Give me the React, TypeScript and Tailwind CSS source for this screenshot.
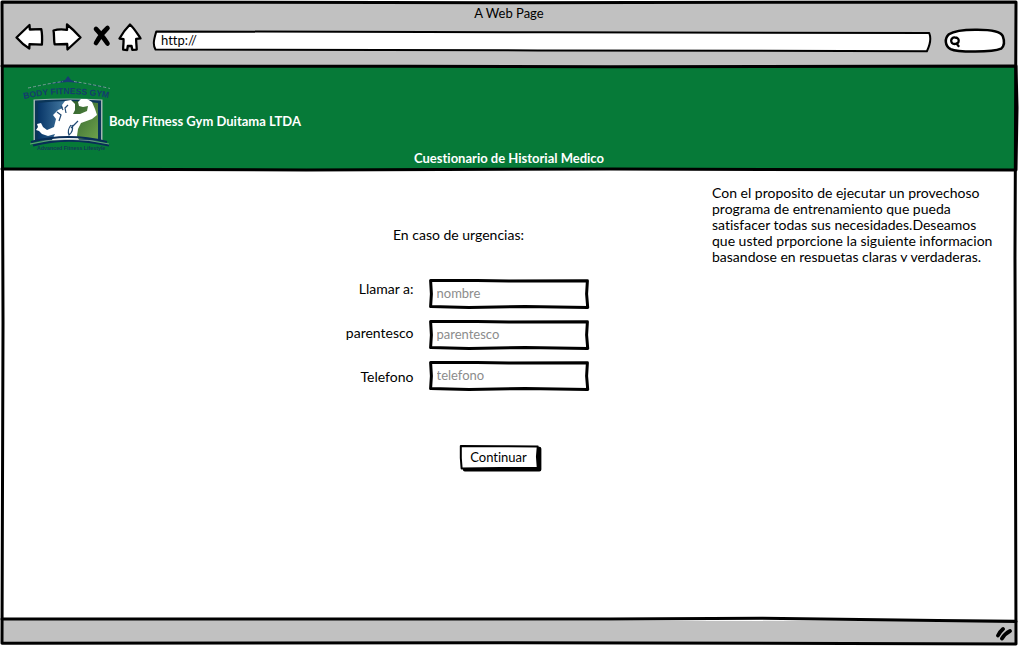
import type { ReactNode } from "react";

const ink = { stroke: "#000", vectorEffect: "non-scaling-stroke" as const };

function Sketch({ d, width = 3, fill = "none", className }: { d: string; width?: number; fill?: string; className: string }) {
  return (
    <svg aria-hidden="true" viewBox="0 0 100 100" preserveAspectRatio="none" className={`pointer-events-none block overflow-visible ${className}`}>
      <path {...ink} d={d} fill={fill} strokeWidth={width} strokeLinejoin="round" strokeLinecap="round" />
    </svg>
  );
}

function ToolButton({ label, children, className }: { label: string; children: ReactNode; className: string }) {
  return (
    <button type="button" aria-label={label} className={`block shrink-0 ${className}`}>
      {children}
    </button>
  );
}

const glyph = { fill: "#fff", stroke: "#000", strokeWidth: 2.3, strokeLinejoin: "round" as const, strokeLinecap: "round" as const };

function Toolbar() {
  return (
    <header className="h-[65px] bg-[#c1c1c1] text-center">
      <h1 className="pt-[2px] text-[13px] leading-[18px]">A Web Page</h1>
      <div className="flex items-start px-3">
        <ToolButton label="Atrás" className="w-[32px]">
          <svg viewBox="0 0 32 32" className="h-8 w-8">
            <path {...glyph} d="M2.500 15.500 15.500 3l.3 4.500 11.500-.3c.8 4 .9 11 .6 15.500l-12.400-.5-.2 4.300C11 24 6 19.500 2.500 15.500z" />
          </svg>
        </ToolButton>
        <ToolButton label="Adelante" className="ml-[6px] w-[32px]">
          <svg viewBox="0 0 32 32" className="h-8 w-8">
            <path {...glyph} d="M1.500 8.500c3-1 10-1.200 13.500-.7V2.500C19.500 6 24.500 11 28.500 15.500L15.500 27.500l-.3-5.500-12.500.3c-1-3-.3-10-1.200-13.800z" />
          </svg>
        </ToolButton>
        <ToolButton label="Detener" className="ml-[8px] w-[20px]">
          <svg viewBox="0 0 20 32" className="h-8 w-5">
            <path d="M4 7Q9 12 15.500 21.500M15.500 6Q9 12 4 21" fill="none" stroke="#000" strokeWidth="4.600" strokeLinecap="round" />
          </svg>
        </ToolButton>
        <ToolButton label="Inicio" className="ml-[6px] w-[24px]">
          <svg viewBox="0 0 24 32" className="h-8 w-6">
            <path {...glyph} d="M12 2.500C8 6.500 4 12 1.500 16.500l4 .7c.3 4-.5 7-.3 10.500l4 .3.600-4 3.700-.2.8 4 4.400-.2c0-4-.7-7-.5-10.800l4.300-.5C19.500 12 16 6 12 2.500z" />
          </svg>
        </ToolButton>
        <div className="relative mt-[9px] ml-[12px] h-[20px] min-w-0 flex-1">
          <Sketch d="M.3 2C0 40-.2 70 .2 93 30 93 70 101 99.600 101 100 70 100.200 40 99.900 10 70 10 30 3 .3 2Z" width={2} fill="#fff" className="absolute inset-0 h-full w-full" />
          <input aria-label="Dirección" defaultValue="http://" className="relative block w-full bg-transparent px-[7px] py-px text-[13px] leading-4 outline-none" />
        </div>
        <div className="relative mt-[7px] ml-[16px] h-[24px] w-[58px]">
          <Sketch d="M5 22C15 6 35 3 50 3 80 2 95 12 98 30 101 50 101 70 95 82 80 98 20 98 8 84-2 70-3 40 5 22Z" width={2.500} fill="#fff" className="absolute inset-0 h-full w-full" />
          <input aria-label="Buscar" type="search" className="relative block w-full bg-transparent py-1 pr-2 pl-[18px] text-[13px] leading-4 outline-none" />
          <svg aria-hidden="true" viewBox="0 0 12 14" className="absolute top-[6px] left-[4px] h-[14px] w-[12px]">
            <path d="M5 2.500c-5-.5-5 6.500-.5 6.500C10 9 10 2.500 5 2.500ZM6.500 8.500l2 2.500" fill="none" stroke="#000" strokeWidth="2.300" strokeLinecap="round" />
          </svg>
        </div>
      </div>
    </header>
  );
}

function Logo() {
  return (
    <svg viewBox="0 0 88 74" role="img" aria-label="Body Fitness Gym" className="h-[74px] w-[88px] shrink-0 overflow-visible">
      <defs>
        <linearGradient id="shieldLeft" x1="0" x2="1">
          <stop offset="0" stopColor="#073567" />
          <stop offset="1" stopColor="#4f86ac" />
        </linearGradient>
        <linearGradient id="shieldRight" x1="0" x2="1" y1="0" y2="1">
          <stop offset="0" stopColor="#2c5b2b" />
          <stop offset="1" stopColor="#6da24b" />
        </linearGradient>
        <path id="arch" d="M3 23Q45 13 92 23" />
      </defs>
      <path d="M7 12Q34 7 44 4l3-4 3 4q10 4 39 8Q64 7 47 6 30 7 7 12Z" fill="#173d72" />
      <path d="M7 12Q30 7 42 5.500M53 5.500Q70 8 89 12.500" fill="none" stroke="#8fa9a8" strokeWidth=".8" strokeDasharray="3 2" />
      <text fill="#153c6d" fontFamily="Liberation Sans" fontSize="8.600">
        <textPath href="#arch">BODY FITNESS GYM</textPath>
      </text>
      <path d="M12.500 23.500q34-2 69 0v41h-69z" fill="#a2b4b3" />
      <path d="M14 24.500q33-2 66 0v40H14z" fill="#0a3558" />
      <path d="M17 27q16-2 32-2v38H17z" fill="url(#shieldLeft)" />
      <path d="M49 25q15 0 28 2v36H49z" fill="url(#shieldRight)" />
      <path d="M16 48l4-1 2 4 4 3 7-3 2-8-3-4 5-5 5-2-1-3 3-4 6-1 4 4v6l-2 4 7 0 7-3 1-5-5 1-4-1-1-4 3-3 6 0 5 3 3 7 2 6-5 4-11 4-3 6-1 7 2 4-27 0 3-6-7 2-6-2-3-3-3-1 2-3z" fill="#fff" />
      <path d="M36 36l4 3-2 6M40 30l2 4M47 29l-3 3 1 5M57 45l-7 7M50 49q-4 5-2 10 5-4 3-10" fill="none" stroke="#214b73" strokeWidth="1.200" />
      <path d="M10 66Q47 56 86 66M12 69.500Q47 60 88 69.500" fill="none" stroke="#082d57" strokeWidth="2" />
      <path d="M9 68Q47 58.500 88 68" fill="none" stroke="#a6b9ab" strokeWidth=".6" />
      <text x="16" y="74" fill="#123b57" fontFamily="Liberation Sans" fontSize="5.300">Advanced Fitness Lifestyle</text>
    </svg>
  );
}

const fields = [
  { id: "nombre", label: "Llamar a:", type: "text" },
  { id: "parentesco", label: "parentesco", type: "text" },
  { id: "telefono", label: "Telefono", type: "tel" },
];

export default function App() {
  return (
    <div className="flex min-h-screen flex-col bg-white pt-[2px] pr-[3px] pb-[2px] pl-[2px] font-['Lato','Noto_Sans',sans-serif] text-[14px] text-black [font-variant-ligatures:none]">
      <div className="relative flex flex-1 flex-col">
        <Toolbar />
        <section className="relative flex flex-col bg-[#067a38] pt-[9px] pb-[3px] font-bold text-white">
          <div className="flex items-center pl-[19px]">
            <Logo />
            <h2 className="pt-4 text-[13px] leading-4">Body Fitness Gym Duitama LTDA</h2>
          </div>
          <h3 className="text-center text-[13px] leading-4">Cuestionario de Historial Medico</h3>
          <Sketch d="M0-1 40-.7 60-.3 100-1 100.100 40 100 101 60 100 30 101 0 100" width={3} className="absolute inset-0 h-full w-full" />
        </section>

        <main className="flex flex-1 items-start">
          <form className="ml-[32.200%] w-[260px] pt-[58px]" onSubmit={(e) => e.preventDefault()}>
            <h4 className="text-center leading-4">En caso de urgencias:</h4>
            <div className="mt-9 flex justify-end gap-[15px]">
              <div className="flex flex-col gap-6 text-right leading-5">
                {fields.map((f) => (
                  <label key={f.id} htmlFor={f.id}>{f.label}</label>
                ))}
              </div>
              <div className="flex w-[160px] flex-col gap-[11px]">
                {fields.map((f) => (
                  <div key={f.id} className="relative h-[30px]">
                    <Sketch d="M1 5 30 5 50 7 99 6 98.500 50 99.200 95 60 92 25 95 1 92 1.500 50Z" width={3} className="absolute inset-0 h-full w-full" />
                    <input id={f.id} type={f.type} placeholder={f.id} className="relative block h-full w-full bg-transparent px-2 pb-[2px] text-[13px] outline-none placeholder:text-[#8c8c8c]" />
                  </div>
                ))}
              </div>
            </div>
            <div className="mt-[54px] flex justify-end pr-12">
              <button type="submit" className="relative h-[26px] w-[81px] text-[13px]">
                <Sketch d="M6 94 98 94 98 14" width={4} className="absolute inset-0 h-full w-full" />
                <Sketch d="M1 4 50 5 96 6 95 45 96 88 50 88 2 90 1 50Z" width={2} fill="#fff" className="absolute inset-0 h-full w-full" />
                <span className="relative block pr-[3px] pb-px">Continuar</span>
              </button>
            </div>
          </form>
          <p className="mt-4 mr-4 ml-auto h-[77px] w-[288px] overflow-hidden leading-4">
            Con el proposito de ejecutar un provechoso<br />
            programa de entrenamiento que pueda<br />
            satisfacer todas sus necesidades.Deseamos<br />
            que usted prporcione la siguiente informacion<br />
            basandose en respuetas claras y verdaderas.
          </p>
        </main>

        <footer className="relative flex h-[25px] items-center justify-end bg-[#c1c1c1] pr-[3px]">
          <Sketch d="M0 0 60 0 75-3 100 10" width={3} fill="#fff" className="absolute inset-0 h-full w-full" />
          <svg aria-hidden="true" viewBox="0 0 18 18" className="relative h-[18px] w-[18px]">
            <path d="M3 12.500q2-4 5-6.500M7 15.500q3-5 8-7.500" fill="none" stroke="#000" strokeWidth="3.800" strokeLinecap="round" />
          </svg>
        </footer>
        <Sketch d="M0 0 50 .1 100 0 99.900 40 100 100 50 99.800 0 99.900 .1 50Z" width={3} className="absolute inset-0 h-full w-full" />
      </div>
    </div>
  );
}
